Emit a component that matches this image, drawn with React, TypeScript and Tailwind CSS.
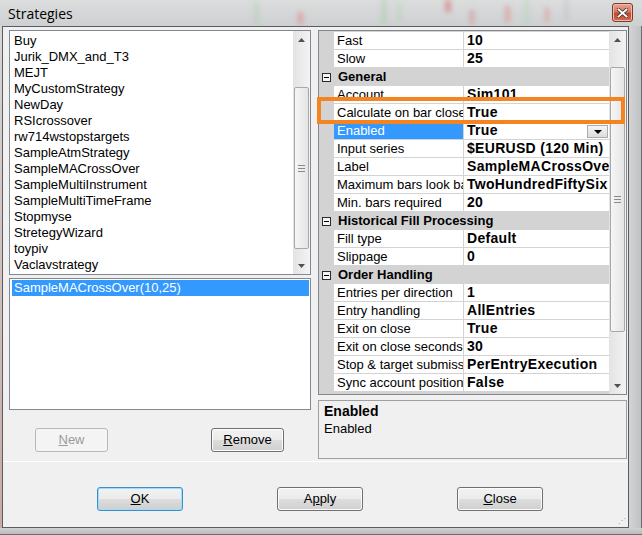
import type { ReactNode } from "react";

const strategies = [
  "Buy",
  "Jurik_DMX_and_T3",
  "MEJT",
  "MyCustomStrategy",
  "NewDay",
  "RSIcrossover",
  "rw714wstopstargets",
  "SampleAtmStrategy",
  "SampleMACrossOver",
  "SampleMultiInstrument",
  "SampleMultiTimeFrame",
  "Stopmyse",
  "StretegyWizard",
  "toypiv",
  "Vaclavstrategy",
];

type Row =
  | { cat: string }
  | { name: string; value: string; selected?: boolean; combo?: boolean };

const rows: Row[] = [
  { name: "Fast", value: "10" },
  { name: "Slow", value: "25" },
  { cat: "General" },
  { name: "Account", value: "Sim101" },
  { name: "Calculate on bar close", value: "True" },
  { name: "Enabled", value: "True", selected: true, combo: true },
  { name: "Input series", value: "$EURUSD (120 Min)" },
  { name: "Label", value: "SampleMACrossOver" },
  { name: "Maximum bars look back", value: "TwoHundredFiftySix" },
  { name: "Min. bars required", value: "20" },
  { cat: "Historical Fill Processing" },
  { name: "Fill type", value: "Default" },
  { name: "Slippage", value: "0" },
  { cat: "Order Handling" },
  { name: "Entries per direction", value: "1" },
  { name: "Entry handling", value: "AllEntries" },
  { name: "Exit on close", value: "True" },
  { name: "Exit on close seconds", value: "30" },
  { name: "Stop & target submission", value: "PerEntryExecution" },
  { name: "Sync account position", value: "False" },
];

function Arrow({ down }: { down?: boolean }) {
  return (
    <div className="h-[17px] flex items-center justify-center">
      <svg width="7" height="4" viewBox="0 0 7 4">
        <path d={down ? "M0 0 L7 0 L3.5 4Z" : "M0 4 L3.5 0 L7 4Z"} fill="#505050" />
      </svg>
    </div>
  );
}

function ScrollBar({ thumb }: { thumb: string }) {
  return (
    <div className="w-[17px] shrink-0 flex flex-col bg-[linear-gradient(to_right,#e3e3e3,#f3f3f3)]">
      <Arrow />
      <div className="flex-1">
        <div
          className={`${thumb} mx-[1px] rounded-[2px] border border-[#a8a8a8] bg-[linear-gradient(to_right,#f6f6f6,#e4e4e4)] flex flex-col items-center justify-center gap-[2px]`}
        >
          <div className="w-[7px] h-[1px] bg-[#8a8a8a]" />
          <div className="w-[7px] h-[1px] bg-[#8a8a8a]" />
          <div className="w-[7px] h-[1px] bg-[#8a8a8a]" />
        </div>
      </div>
      <Arrow down />
    </div>
  );
}

function WinButton({
  children,
  width,
  disabled,
  focused,
}: {
  children: ReactNode;
  width: string;
  disabled?: boolean;
  focused?: boolean;
}) {
  if (disabled) {
    return (
      <div
        className={`${width} h-[24px] rounded-[3px] border border-[#b5b9bc] bg-[#f4f4f4] text-[#9a9a9a] flex items-center justify-center`}
      >
        {children}
      </div>
    );
  }
  return (
    <div
      className={`${width} h-[24px] rounded-[3px] border ${
        focused
          ? "border-[#3c8fcf] shadow-[inset_0_0_0_1px_#9edcf7]"
          : "border-[#707070] shadow-[inset_0_0_0_1px_#fbfbfb]"
      } bg-[linear-gradient(to_bottom,#f2f2f2_0%,#ebebeb_50%,#dddddd_50%,#cfcfcf_100%)] text-black flex items-center justify-center`}
    >
      {children}
    </div>
  );
}

function Minus() {
  return (
    <svg width="9" height="9" viewBox="0 0 9 9">
      <rect x="0.5" y="0.5" width="8" height="8" fill="#f4f4f4" stroke="#2b2b2b" />
      <path d="M2 4.5 H7" stroke="#000" />
    </svg>
  );
}

function PropertyRow({ row }: { row: Row }) {
  if ("cat" in row) {
    return (
      <div className="h-[18px] flex items-center bg-[#d3d3d3]">
        <div className="w-[15px] flex justify-center">
          <Minus />
        </div>
        <div className="pl-[4px] font-bold leading-[18px]">{row.cat}</div>
      </div>
    );
  }
  return (
    <div className="h-[18px] flex">
      <div className="w-[15px] shrink-0" />
      <div
        className={`w-[130px] shrink-0 border-b border-r border-[#d3d3d3] pl-[3px] leading-[17px] whitespace-nowrap overflow-hidden ${
          row.selected ? "bg-[#3399ff] text-white" : "bg-white"
        }`}
      >
        {row.name}
      </div>
      <div className="relative flex-1 min-w-0 bg-white border-b border-[#d3d3d3] pl-[3px] font-bold text-[14px] tracking-[0.3px] leading-[17px] whitespace-nowrap overflow-hidden">
        {row.value}
        {row.combo && (
          <div className="absolute right-[1px] top-[3px] w-[21px] h-[13px] border border-[#acacac] bg-[linear-gradient(to_bottom,#f5f5f5,#dcdcdc)] flex items-center justify-center">
            <svg width="8" height="4" viewBox="0 0 8 4">
              <path d="M0 0 L8 0 L4 4Z" fill="#000" />
            </svg>
          </div>
        )}
      </div>
    </div>
  );
}

function TitleBar() {
  return (
    <div className="relative h-[26px] bg-[linear-gradient(to_bottom,#dcdddd,#cdd0d1)] overflow-hidden">
      <svg className="absolute inset-0" width="642" height="26">
        <defs>
          <filter id="b" x="-50%" y="-50%" width="200%" height="200%">
            <feGaussianBlur stdDeviation="2.5" />
          </filter>
        </defs>
        <g filter="url(#b)" opacity="0.55">
          <rect x="255" y="2" width="3" height="22" fill="#9ccf9c" />
          <rect x="298" y="12" width="5" height="12" fill="#e07c7c" />
          <rect x="382" y="0" width="4" height="24" fill="#9ccf9c" />
          <rect x="398" y="2" width="3" height="20" fill="#a8d4a8" />
          <rect x="445" y="0" width="6" height="12" fill="#d86868" />
          <rect x="470" y="10" width="4" height="14" fill="#d98080" />
          <rect x="505" y="6" width="5" height="16" fill="#e08a8a" />
          <rect x="525" y="0" width="3" height="24" fill="#a8d4a8" />
          <rect x="545" y="8" width="4" height="14" fill="#de8c8c" />
          <rect x="565" y="0" width="3" height="20" fill="#b6b6b6" />
        </g>
      </svg>
      <div className="absolute left-[8px] top-[3px] font-['Open_Sans','Noto_Sans',sans-serif] text-[14px] text-black">
        Strategies
      </div>
      <div className="absolute left-[612px] top-[3px] w-[21px] h-[19px] rounded-[3px] border border-[#7a3a2c] bg-[linear-gradient(to_bottom,#e8a493_0%,#d7765c_45%,#c4472b_55%,#d76a4d_100%)] flex items-center justify-center shadow-[inset_0_0_0_1px_#f1b9a9]">
        <svg width="11" height="10" viewBox="0 0 11 10">
          <path d="M1.5 1.5 L9.5 8.5 M9.5 1.5 L1.5 8.5" stroke="#3a3a3a" strokeWidth="3.4" strokeLinecap="square" />
          <path d="M1.5 1.5 L9.5 8.5 M9.5 1.5 L1.5 8.5" stroke="#ffffff" strokeWidth="1.8" strokeLinecap="square" />
        </svg>
      </div>
    </div>
  );
}

export default function App() {
  return (
    <div className="relative w-[642px] h-[535px] overflow-hidden bg-[#c9cbcd] font-['Liberation_Sans',Arial,sans-serif] text-[13px] text-black">
      <TitleBar />
      <div className="flex h-[502px]">
        <div className="w-[2px] bg-[linear-gradient(to_bottom,#d6d6d6,#c9a9a9)]" />
        <div className="w-[627px] border border-[#5c5c5c] bg-[#f0f0f0] flex flex-col">
          <div className="h-[435px] border-b border-white flex pt-[3px] pl-[6px]">
            <div className="w-[302px] flex flex-col">
              <div className="h-[245px] border border-[#828790] bg-white flex">
                <div className="flex-1 pt-[2px] pl-[4px] leading-[16px]">
                  {strategies.map((s) => (
                    <div key={s} className="h-[16px] whitespace-nowrap">
                      {s}
                    </div>
                  ))}
                </div>
                <ScrollBar thumb="mt-[39px] h-[162px]" />
              </div>
              <div className="mt-[3px] h-[132px] border border-[#828790] bg-white pt-[1px] pl-[2px] pr-[1px]">
                <div className="h-[16px] bg-[#3399ff] text-white pl-[2px] leading-[16px]">
                  SampleMACrossOver(10,25)
                </div>
              </div>
              <div className="mt-[18px] flex pl-[26px] gap-[103px]">
                <WinButton width="w-[73px]" disabled>
                  <span>
                    <span className="underline">N</span>ew
                  </span>
                </WinButton>
                <WinButton width="w-[73px]">
                  <span>
                    <span className="underline">R</span>emove
                  </span>
                </WinButton>
              </div>
            </div>
            <div className="ml-[7px] w-[309px] flex flex-col">
              <div className="relative h-[365px] border border-[#828790] bg-[#d3d3d3] flex">
                <div className="flex-1 min-w-0 pt-[1px] overflow-hidden">
                  {rows.map((r, i) => (
                    <PropertyRow key={i} row={r} />
                  ))}
                </div>
                <ScrollBar thumb="mt-[19px] h-[265px]" />
                <div className="absolute left-[-2px] top-[66px] w-[308px] h-[27px] border-[4px] border-[#f5831f]" />
              </div>
              <div className="mt-[5px] h-[59px] border border-[#a0a0a0] bg-[#f0f0f0] pl-[5px] pt-[2px] leading-[17px]">
                <div className="font-bold text-[14px]">Enabled</div>
                <div>Enabled</div>
              </div>
            </div>
          </div>
          <div className="flex-1 relative pt-[25px] pl-[94px] flex gap-[94px]">
            <WinButton width="w-[86px]" focused>
              <span>
                <span className="underline">O</span>K
              </span>
            </WinButton>
            <WinButton width="w-[86px]">
              <span>
                A<span className="underline">p</span>ply
              </span>
            </WinButton>
            <WinButton width="w-[86px]">
              <span>
                <span className="underline">C</span>lose
              </span>
            </WinButton>
            <div className="absolute right-[2px] bottom-[2px] text-[8px] leading-none text-[#a0a0a0]">
              ⋰
            </div>
          </div>
        </div>
        <div className="flex-1 bg-[linear-gradient(to_right,#d2d4d5,#bfc1c3)] border-r border-[#6e6e6e]" />
      </div>
      <div className="h-[7px] bg-[linear-gradient(to_bottom,#cfd1d2,#b9bbbd)] border-b border-[#6e6e6e]" />
    </div>
  );
}
